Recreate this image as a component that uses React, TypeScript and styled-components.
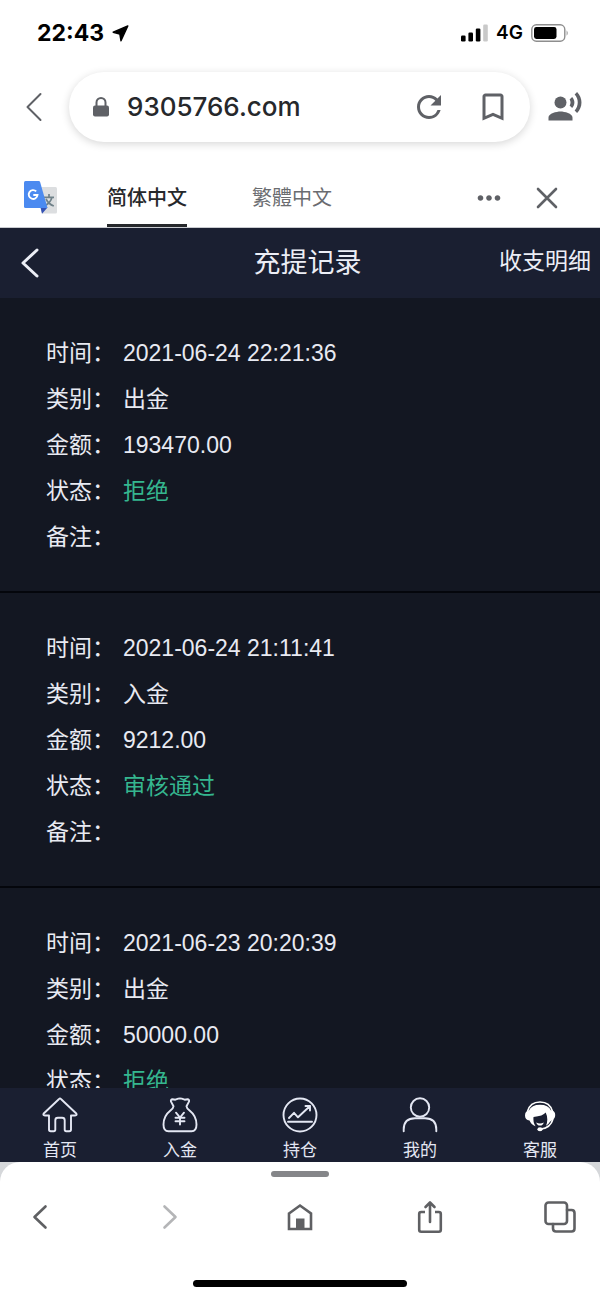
import React from "react";
import styled, { createGlobalStyle } from "styled-components";
import {
  MdBookmarkBorder,
  MdMoreHoriz,
  MdRecordVoiceOver,
  MdRefresh,
} from "react-icons/md";

const sans = `"Liberation Sans", "Noto Sans CJK SC", sans-serif`;
const system = `Inter, "Noto Sans CJK SC", sans-serif`;

const GlobalStyle = createGlobalStyle`
  *, *::before, *::after { box-sizing: border-box; }
  body { margin: 0; background: #fff; font-family: ${sans}; }
  button { border: 0; padding: 0; background: none; color: inherit; font: inherit; cursor: pointer; }
  a { color: inherit; text-decoration: none; }
  svg { display: block; flex: none; }
`;

const Screen = styled.div`
  display: flex;
  flex-direction: column;
  height: 100vh;
`;

/* Phone status bar */

const StatusBar = styled.div`
  flex: none;
  display: flex;
  align-items: center;
  height: 72px;
  padding: 0 31px 6px 37px;
  color: #000;
  font-family: ${system};
`;

const Clock = styled.time`
  margin-right: 8px;
  font-size: 23px;
  line-height: 28px;
  font-weight: 700;
`;

const StatusIcons = styled.div`
  display: flex;
  align-items: center;
  gap: 8px;
  margin-left: auto;
  font-size: 19px;
  line-height: 24px;
  font-weight: 600;
`;

/* Browser address bar */

const AddressBar = styled.div`
  flex: none;
  display: grid;
  grid-template-columns: 49px 1fr 53px;
  align-items: center;
  padding: 0 17px 26px 20px;
  color: #5f6166;
`;

const IconButton = styled.button<{ $size?: number; $end?: boolean }>`
  flex: none;
  display: flex;
  align-items: center;
  justify-content: center;
  width: ${(p) => p.$size ?? 36}px;
  height: 40px;
  justify-self: ${(p) => (p.$end ? "end" : "start")};
`;

const AddressPill = styled.form`
  display: flex;
  align-items: center;
  min-width: 0;
  height: 70px;
  padding: 0 19px 0 20px;
  border-radius: 35px;
  background: #fff;
  box-shadow: 0 2px 8px rgba(0, 0, 0, 0.16);
`;

const AddressInput = styled.input`
  flex: 1;
  min-width: 0;
  margin-left: 14px;
  padding: 0;
  border: 0;
  outline: 0;
  background: none;
  color: #26282b;
  font-family: ${system};
  font-size: 26px;
  line-height: 32px;
  font-weight: 500;
`;

const PillActions = styled.div`
  display: flex;
  gap: 28px;
`;

/* Translation bar */

const TranslateBar = styled.div`
  flex: none;
  display: flex;
  align-items: center;
  height: 60px;
  padding: 0 35px 0 23px;
  border-bottom: 1px solid #c9cbd0;
  color: #5f6166;
`;

const Languages = styled.div`
  display: flex;
  align-self: stretch;
  gap: 65px;
  margin-left: 48px;
`;

const LanguageTab = styled.button<{ $active?: boolean }>`
  padding-top: 4px;
  border-bottom: 3px solid ${(p) => (p.$active ? "#26282b" : "transparent")};
  border-radius: 2px 2px 0 0;
  color: ${(p) => (p.$active ? "#26282b" : "#6a6c70")};
  font-size: 20px;
  line-height: 28px;
  font-weight: ${(p) => (p.$active ? 500 : 400)};
`;

const TranslateActions = styled.div`
  display: flex;
  gap: 22px;
  margin-left: auto;
`;

/* Site content */

const SiteHeader = styled.header`
  flex: none;
  display: grid;
  grid-template-columns: 96px 1fr auto;
  align-items: center;
  height: 70px;
  padding: 0 9px 0 20px;
  background: #1a1f31;
  color: #eceef6;
`;

const Title = styled.h1`
  margin: 0;
  font-size: 27px;
  line-height: 36px;
  font-weight: 400;
  text-align: center;
`;

const HeaderLink = styled.a`
  padding-bottom: 4px;
  font-size: 23px;
  line-height: 32px;
`;

const Records = styled.main`
  flex: 1;
  min-height: 0;
  overflow-y: auto;
  scrollbar-width: none;
  background: #131722;
  color: #e8eaf2;
`;

const Record = styled.dl`
  display: grid;
  grid-template-columns: auto 1fr;
  grid-auto-rows: 46px;
  align-items: center;
  column-gap: 8px;
  margin: 0;
  padding: 32px 46px 31px;
  border-bottom: 2px solid #04060c;
  font-size: 23px;
  line-height: 32px;
`;

const Label = styled.dt``;

const Value = styled.dd<{ $status?: boolean }>`
  margin: 0;
  color: ${(p) => (p.$status ? "#35b68f" : "inherit")};
`;

const SiteNav = styled.nav`
  flex: none;
  display: grid;
  grid-template-columns: repeat(5, 1fr);
  background: #1a1f31;
  color: #e4e7f3;
`;

const NavLink = styled.a`
  display: flex;
  flex-direction: column;
  align-items: center;
  gap: 7px;
  padding-top: 9px;
  font-size: 17px;
  line-height: 22px;
`;

/* Browser bottom sheet */

const SheetBackdrop = styled.div`
  flex: none;
  background: #d5d7da;
`;

const Sheet = styled.div`
  display: flex;
  flex-direction: column;
  align-items: center;
  padding: 9px 0 12px;
  border-radius: 20px 20px 0 0;
  background: #fff;
  color: #5f6063;
`;

const Handle = styled.div`
  width: 58px;
  height: 6px;
  border-radius: 3px;
  background: #858689;
`;

const Toolbar = styled.div`
  display: flex;
  justify-content: space-between;
  align-self: stretch;
  margin: 20px 0 43px;
  padding: 0 20px;
`;

const HomeIndicator = styled.div`
  width: 214px;
  height: 7px;
  border-radius: 4px;
  background: #000;
`;

interface StrokeProps {
  width: number;
  height: number;
  stroke?: number;
  color?: string;
  children: React.ReactNode;
}

const StrokeIcon = ({ width, height, stroke = 2, color = "currentColor", children }: StrokeProps) => (
  <svg
    width={width}
    height={height}
    viewBox={`0 0 ${width} ${height}`}
    fill="none"
    stroke={color}
    strokeWidth={stroke}
    strokeLinecap="round"
    strokeLinejoin="round"
    aria-hidden="true"
  >
    {children}
  </svg>
);

const LocationIcon = () => (
  <svg width="17" height="17" viewBox="0 0 17 17" aria-hidden="true">
    <path
      d="M15.800 1 1.200 7.200 7.800 9 9 15.800Z"
      fill="#000"
      stroke="#000"
      strokeWidth="1.400"
      strokeLinejoin="round"
    />
  </svg>
);

const LockIcon = () => (
  <svg width="24" height="24" viewBox="0 0 24 24" aria-hidden="true">
    <rect x="4" y="10.500" width="16" height="11" rx="2" fill="currentColor" />
    <path d="M7.500 11V7.500a4.500 4.500 0 0 1 9 0V11" fill="none" stroke="currentColor" strokeWidth="2" />
  </svg>
);

const SignalIcon = () => (
  <svg width="27" height="18" viewBox="0 0 27 18" aria-hidden="true">
    <rect x="0" y="11.5" width="4.6" height="6" rx="1.2" />
    <rect x="7.4" y="8.5" width="4.6" height="9" rx="1.2" />
    <rect x="14.8" y="4.5" width="4.6" height="13" rx="1.2" />
    <rect x="22.2" y="0.5" width="4.6" height="17" rx="1.2" fill="#c9c9c9" />
  </svg>
);

const BatteryIcon = () => (
  <svg width="38" height="18" viewBox="0 0 38 18" aria-hidden="true">
    <rect x=".8" y=".8" width="33" height="16.4" rx="4.6" fill="none" stroke="#8e8e8e" strokeWidth="1.4" />
    <rect x="3" y="3" width="22.5" height="12" rx="2.4" />
    <path d="M35.6 6.2q2.2 2.8 0 5.6z" fill="#8e8e8e" />
  </svg>
);

const TranslateLogo = () => (
  <svg width="36" height="36" viewBox="0 0 36 36" aria-hidden="true">
    <path d="M13 7h19.500Q34 7 34 8.500V32Q34 33.500 32.500 33.500H19z" fill="#dcdee0" />
    <path d="M26 14V17M21 17.300h10M29 17.300Q27.500 23 21.500 26M23 19Q25.500 24 30.800 26" fill="none" stroke="#6f8189" strokeWidth="1.700" />
    <path d="M17.500 27.500h7L19 33.800z" fill="#3452b4" />
    <path d="M2.500 1h13.300q1 0 1.300 1L24.500 28H2.500Q1 28 1 26.500v-24Q1 1 2.500 1z" fill="#4b8af0" />
    <path d="M13.200 11.400A4.400 4.400 0 1 0 14.500 15H10.300" fill="none" stroke="#fff" strokeWidth="1.900" />
  </svg>
);

const HomeIcon = () => (
  <StrokeIcon width={36} height={36} stroke={1.9}>
    <path d="M16.800 2.200Q18 1 19.200 2.200L34 16.200Q35.600 18.300 33 18.500H29V32.500Q29 34.200 27.300 34.200H24.200Q22.700 34.200 22.700 32.500V23.300Q22.700 20.800 20.200 20.800H15.800Q13.300 20.800 13.300 23.300V32.500Q13.300 34.200 11.800 34.200H8.700Q7 34.200 7 32.500V18.500H3Q.4 18.300 2 16.200Z" />
  </StrokeIcon>
);

const MoneyBagIcon = () => (
  <StrokeIcon width={36} height={36} stroke={1.9}>
    <path d="M11.500 9.300 8.900 4.400Q8.600 2.500 10.500 2.300L13.300 2.700 16.300 1.700Q18 1.200 19.700 1.700L22.700 2.700 25.500 2.300Q27.400 2.500 27.100 4.400L24.500 9.300Q24.800 11.300 27.300 13.300 34.500 19 34.500 27.500 34.500 34.200 29.500 34.200H6.500Q1.500 34.200 1.500 27.500 1.500 19 8.700 13.300 11.200 11.300 11.500 9.300Z" />
    <path d="M14 15.700l4 4.800 4-4.800M18 20.500V27.500M13.500 20.700h9M13.500 24.200h9" />
  </StrokeIcon>
);

const ChartIcon = () => (
  <StrokeIcon width={36} height={36} stroke={1.9}>
    <circle cx="18" cy="18" r="16.500" />
    <path d="M7 21 12 15.800 16 20.300 28 9M23.500 9H28v4.500M6 24.700h24" />
  </StrokeIcon>
);

const UserIcon = () => (
  <StrokeIcon width={36} height={36} stroke={1.9}>
    <circle cx="18" cy="10.500" r="9.200" />
    <path d="M1.700 34.200V32.500Q1.700 21.300 13 21.300H23Q34.300 21.300 34.300 32.500V34.200" />
  </StrokeIcon>
);

const SupportIcon = () => (
  <svg width="36" height="36" viewBox="0 0 36 36" aria-hidden="true">
    <path d="M5.500 14.500Q8 5 18 5T30.500 14.500" fill="none" stroke="#fff" strokeWidth="1.700" />
    <path
      d="M7 13.500Q9.500 7.800 18 7.800T29 13.500H30.500Q33.200 14.500 33.200 18T30.500 22.800L28 24.800Q26.500 27.500 24 28.800 25.300 26 25.300 22.500 25.200 18.500 23.700 15.500 21 19 11.500 20 10.800 25 13.500 29.300 9 27.500 7.500 23.500 3 22.800 3 18.500T7 13.500Z"
      fill="#fff"
    />
    <path d="M14.200 25.500Q18 27.500 21.800 25.500 21 28.600 18 28.600T14.200 25.500Z" fill="#fff" />
    <path d="M31 22Q28.500 31 19 32" fill="none" stroke="#fff" strokeWidth="1.600" />
    <ellipse cx="18" cy="32.300" rx="2.600" ry="2" fill="#fff" />
  </svg>
);

const BrowserHomeIcon = () => (
  <StrokeIcon width={28} height={30} stroke={2.6}>
    <path d="M3 11.500 14 3.500 25 11.500V27H3Z" strokeLinejoin="miter" />
    <path d="M10 16.500h8.500V27H10z" fill="currentColor" stroke="none" />
  </StrokeIcon>
);

const ShareIcon = () => (
  <StrokeIcon width={28} height={34} stroke={2.6}>
    <path d="M9 12H5.200Q3.200 12 3.200 14V29.800Q3.200 31.800 5.200 31.800H22.800Q24.800 31.800 24.800 29.800V14Q24.800 12 22.800 12H19" strokeLinecap="butt" />
    <path d="M14 22V3M9.500 7 14 2.500 18.500 7" />
  </StrokeIcon>
);

const TabsIcon = () => (
  <StrokeIcon width={34} height={34} stroke={2.6}>
    <rect x="2.500" y="2.500" width="21.500" height="21.500" rx="3" />
    <path d="M24 10h4.500q3 0 3 3V28.500q0 3-3 3H13q-3 0-3-3V24" />
  </StrokeIcon>
);

interface Entry {
  time: string;
  type: string;
  amount: string;
  status: string;
  note: string;
}

const entries: Entry[] = [
  { time: "2021-06-24 22:21:36", type: "出金", amount: "193470.00", status: "拒绝", note: "" },
  { time: "2021-06-24 21:11:41", type: "入金", amount: "9212.00", status: "审核通过", note: "" },
  { time: "2021-06-23 20:20:39", type: "出金", amount: "50000.00", status: "拒绝", note: "" },
];

const navItems = [
  { label: "首页", icon: <HomeIcon /> },
  { label: "入金", icon: <MoneyBagIcon /> },
  { label: "持仓", icon: <ChartIcon /> },
  { label: "我的", icon: <UserIcon /> },
  { label: "客服", icon: <SupportIcon /> },
];

export default function App() {
  return (
    <Screen lang="zh-CN">
      <GlobalStyle />

      <StatusBar>
        <Clock>22:43</Clock>
        <LocationIcon />
        <StatusIcons>
          <SignalIcon />
          <span>4G</span>
          <BatteryIcon />
        </StatusIcons>
      </StatusBar>

      <AddressBar>
        <IconButton type="button" $size={28} aria-label="返回">
          <StrokeIcon width={16} height={30}>
            <path d="M14.500 2 1.500 15 14.500 28" />
          </StrokeIcon>
        </IconButton>
        <AddressPill onSubmit={(e) => e.preventDefault()}>
          <LockIcon />
          <AddressInput type="text" aria-label="网址" defaultValue="9305766.com" />
          <PillActions>
            <IconButton type="button" aria-label="刷新">
              <MdRefresh size={36} />
            </IconButton>
            <IconButton type="button" aria-label="书签">
              <MdBookmarkBorder size={36} />
            </IconButton>
          </PillActions>
        </AddressPill>
        <IconButton type="button" $end aria-label="语音">
          <MdRecordVoiceOver size={36} />
        </IconButton>
      </AddressBar>

      <TranslateBar>
        <TranslateLogo />
        <Languages>
          <LanguageTab type="button" $active>
            简体中文
          </LanguageTab>
          <LanguageTab type="button" lang="zh-TW">
            繁體中文
          </LanguageTab>
        </Languages>
        <TranslateActions>
          <IconButton type="button" aria-label="更多">
            <MdMoreHoriz size={34} />
          </IconButton>
          <IconButton type="button" aria-label="关闭">
            <StrokeIcon width={22} height={22} stroke={2.6}>
              <path d="M2 2 20 20M20 2 2 20" />
            </StrokeIcon>
          </IconButton>
        </TranslateActions>
      </TranslateBar>

      <SiteHeader>
        <IconButton type="button" $size={20} aria-label="后退">
          <StrokeIcon width={20} height={30} stroke={3}>
            <path d="M17 2 3 15 17 28" />
          </StrokeIcon>
        </IconButton>
        <Title>充提记录</Title>
        <HeaderLink href="#details">收支明细</HeaderLink>
      </SiteHeader>

      <Records>
        {entries.map((entry) => (
          <Record key={entry.time}>
            <Label>时间：</Label>
            <Value>{entry.time}</Value>
            <Label>类别：</Label>
            <Value>{entry.type}</Value>
            <Label>金额：</Label>
            <Value>{entry.amount}</Value>
            <Label>状态：</Label>
            <Value $status>{entry.status}</Value>
            <Label>备注：</Label>
            <Value>{entry.note}</Value>
          </Record>
        ))}
      </Records>

      <SiteNav>
        {navItems.map((item) => (
          <NavLink key={item.label} href="#">
            {item.icon}
            {item.label}
          </NavLink>
        ))}
      </SiteNav>

      <SheetBackdrop>
        <Sheet>
          <Handle />
          <Toolbar>
            <IconButton type="button" $size={40} aria-label="上一页">
              <StrokeIcon width={16} height={26} stroke={2.6}>
                <path d="M13.500 2.500 2.500 13 13.500 23.500" />
              </StrokeIcon>
            </IconButton>
            <IconButton type="button" $size={40} aria-label="下一页">
              <StrokeIcon width={16} height={26} stroke={2.6} color="#b4b5b7">
                <path d="M2.500 2.500 13.500 13 2.500 23.500" />
              </StrokeIcon>
            </IconButton>
            <IconButton type="button" $size={40} aria-label="主页">
              <BrowserHomeIcon />
            </IconButton>
            <IconButton type="button" $size={40} aria-label="分享">
              <ShareIcon />
            </IconButton>
            <IconButton type="button" $size={40} aria-label="标签页">
              <TabsIcon />
            </IconButton>
          </Toolbar>
          <HomeIndicator />
        </Sheet>
      </SheetBackdrop>
    </Screen>
  );
}
